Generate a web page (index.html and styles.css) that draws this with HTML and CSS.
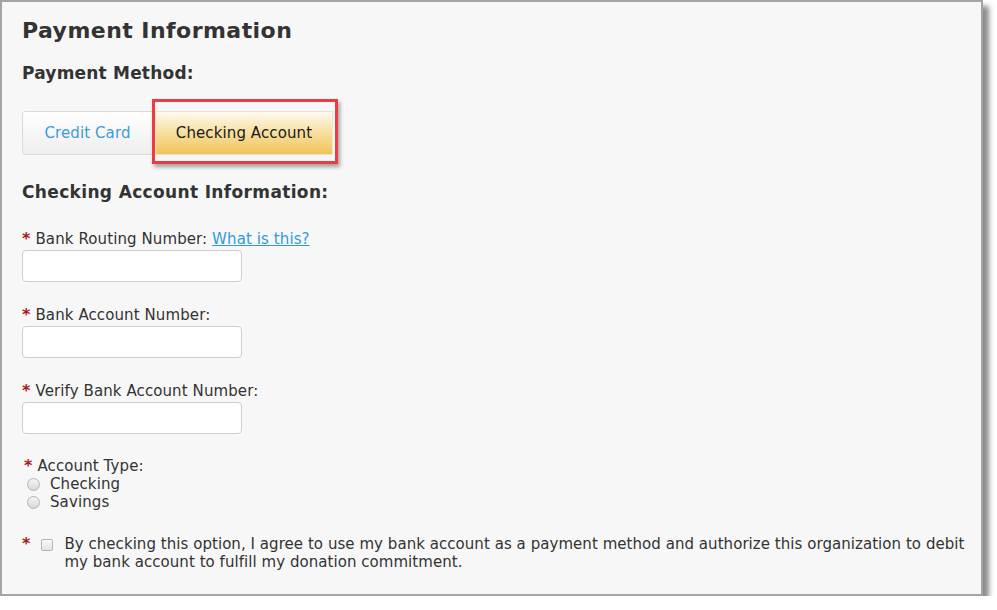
FILE: index.html
```html
<!DOCTYPE html>
<html>
<head>
<meta charset="utf-8">
<link rel="stylesheet" href="styles.css">
</head>
<body>
<div class="frame">
  <h1 class="title">Payment Information</h1>
  <h2 class="subtitle">Payment Method:</h2>
  <div class="tabs">
    <div class="tab tab-card">Credit Card</div>
    <div class="tab tab-check">Checking Account</div>
    <div class="highlight"></div>
  </div>
  <h2 class="section">Checking Account Information:</h2>

  <div class="field">
    <div class="label"><span class="req">*</span>Bank Routing Number: <a class="link" href="#">What is this?</a></div>
    <input class="input" type="text">
  </div>
  <div class="field">
    <div class="label"><span class="req">*</span>Bank Account Number:</div>
    <input class="input" type="text">
  </div>
  <div class="field">
    <div class="label"><span class="req">*</span>Verify Bank Account Number:</div>
    <input class="input" type="text">
  </div>

  <div class="acct">
    <div class="label acct-label"><span class="req">*</span>Account Type:</div>
    <label class="radio-row"><span class="radio"></span>Checking</label>
    <label class="radio-row"><span class="radio"></span>Savings</label>
  </div>

  <div class="agree">
    <span class="req agree-req">*</span>
    <span class="checkbox"></span>
    <p class="agree-text">By checking this option, I agree to use my bank account as a payment method and authorize this organization to debit my bank account to fulfill my donation commitment.</p>
  </div>
</div>
</body>
</html>
```

FILE: styles.css
```css
html, body {
  margin: 0;
  padding: 0;
  background: #ffffff;
}
body {
  font-family: "DejaVu Sans", Verdana, sans-serif;
  color: #333333;
}
.frame {
  box-sizing: border-box;
  width: 983px;
  height: 596px;
  border: 2px solid #a4a4a4;
  background: #f7f7f7;
  box-shadow: 6px 6px 5px rgba(0,0,0,0.45);
  padding: 15px 10px 0 20px;
}
.title {
  margin: 0;
  font-size: 22px;
  line-height: 28px;
  font-weight: bold;
  letter-spacing: 0.45px;
  color: #333;
}
.subtitle {
  margin: 18px 0 0 0;
  font-size: 17px;
  line-height: 20px;
  font-weight: bold;
  letter-spacing: 0.2px;
  color: #333;
}
.tabs {
  position: relative;
  display: flex;
  margin-top: 28px;
  height: 45px;
}
.tab {
  box-sizing: border-box;
  height: 44px;
  display: flex;
  align-items: center;
  justify-content: center;
  font-size: 15px;
  letter-spacing: 0.1px;
  border: 1px solid #dcdcd6;
}
.tab-card {
  width: 131px;
  color: #3d9bd7;
  background: linear-gradient(#ffffff, #eeeeee);
  border-radius: 3px 0 0 3px;
}
.tab-check {
  width: 178px;
  margin-left: 2px;
  color: #1a1a1a;
  border-color: #efe3c0;
  background: linear-gradient(#fefaf0 0%, #f7dc97 55%, #f0c35a 100%);
}
.highlight {
  position: absolute;
  left: 130px;
  top: -12px;
  width: 186px;
  height: 65px;
  box-sizing: border-box;
  border: 3px solid #ec3b42;
  box-shadow: 2px 3px 4px rgba(0,0,0,0.35);
}
.section {
  margin: 26px 0 0 0;
  font-size: 17px;
  line-height: 20px;
  font-weight: bold;
  letter-spacing: 0.35px;
  color: #333;
}
.field {
  margin-top: 28px;
}
.field + .field {
  margin-top: 24px;
}
.label {
  font-size: 15px;
  line-height: 18px;
  letter-spacing: 0.1px;
  color: #333;
}
.req {
  color: #a8191c;
  font-weight: bold;
  font-size: 16px;
  margin-right: 5px;
}
.link {
  color: #2e9cdb;
  text-decoration: underline;
}
.input {
  display: block;
  box-sizing: border-box;
  width: 220px;
  height: 32px;
  margin-top: 2px;
  border: 1px solid #cfcfcf;
  border-radius: 4px;
  background: #ffffff;
  padding: 0 6px;
}
.acct {
  margin-top: 23px;
  padding-left: 2px;
}
.radio-row {
  display: flex;
  align-items: center;
  font-size: 15px;
  line-height: 18px;
  letter-spacing: 0.1px;
  color: #333;
}
.radio {
  box-sizing: border-box;
  width: 13px;
  height: 13px;
  border-radius: 50%;
  border: 1px solid #b4b4b4;
  background: linear-gradient(#f4f4f4, #d8d8d8);
  margin: 0 10px 0 3px;
}
.agree {
  display: flex;
  align-items: flex-start;
  margin-top: 24px;
}
.agree-req {
  line-height: 18px;
  margin-right: 11px;
}
.checkbox {
  box-sizing: border-box;
  width: 12px;
  height: 12px;
  margin-top: 4px;
  border: 1px solid #b4b4b4;
  border-radius: 2px;
  background: linear-gradient(#fafafa, #e2e2e2);
  flex: none;
}
.agree-text {
  margin: 0 0 0 11px;
  font-size: 15px;
  line-height: 18px;
  letter-spacing: 0.05px;
  color: #333;
}
```
